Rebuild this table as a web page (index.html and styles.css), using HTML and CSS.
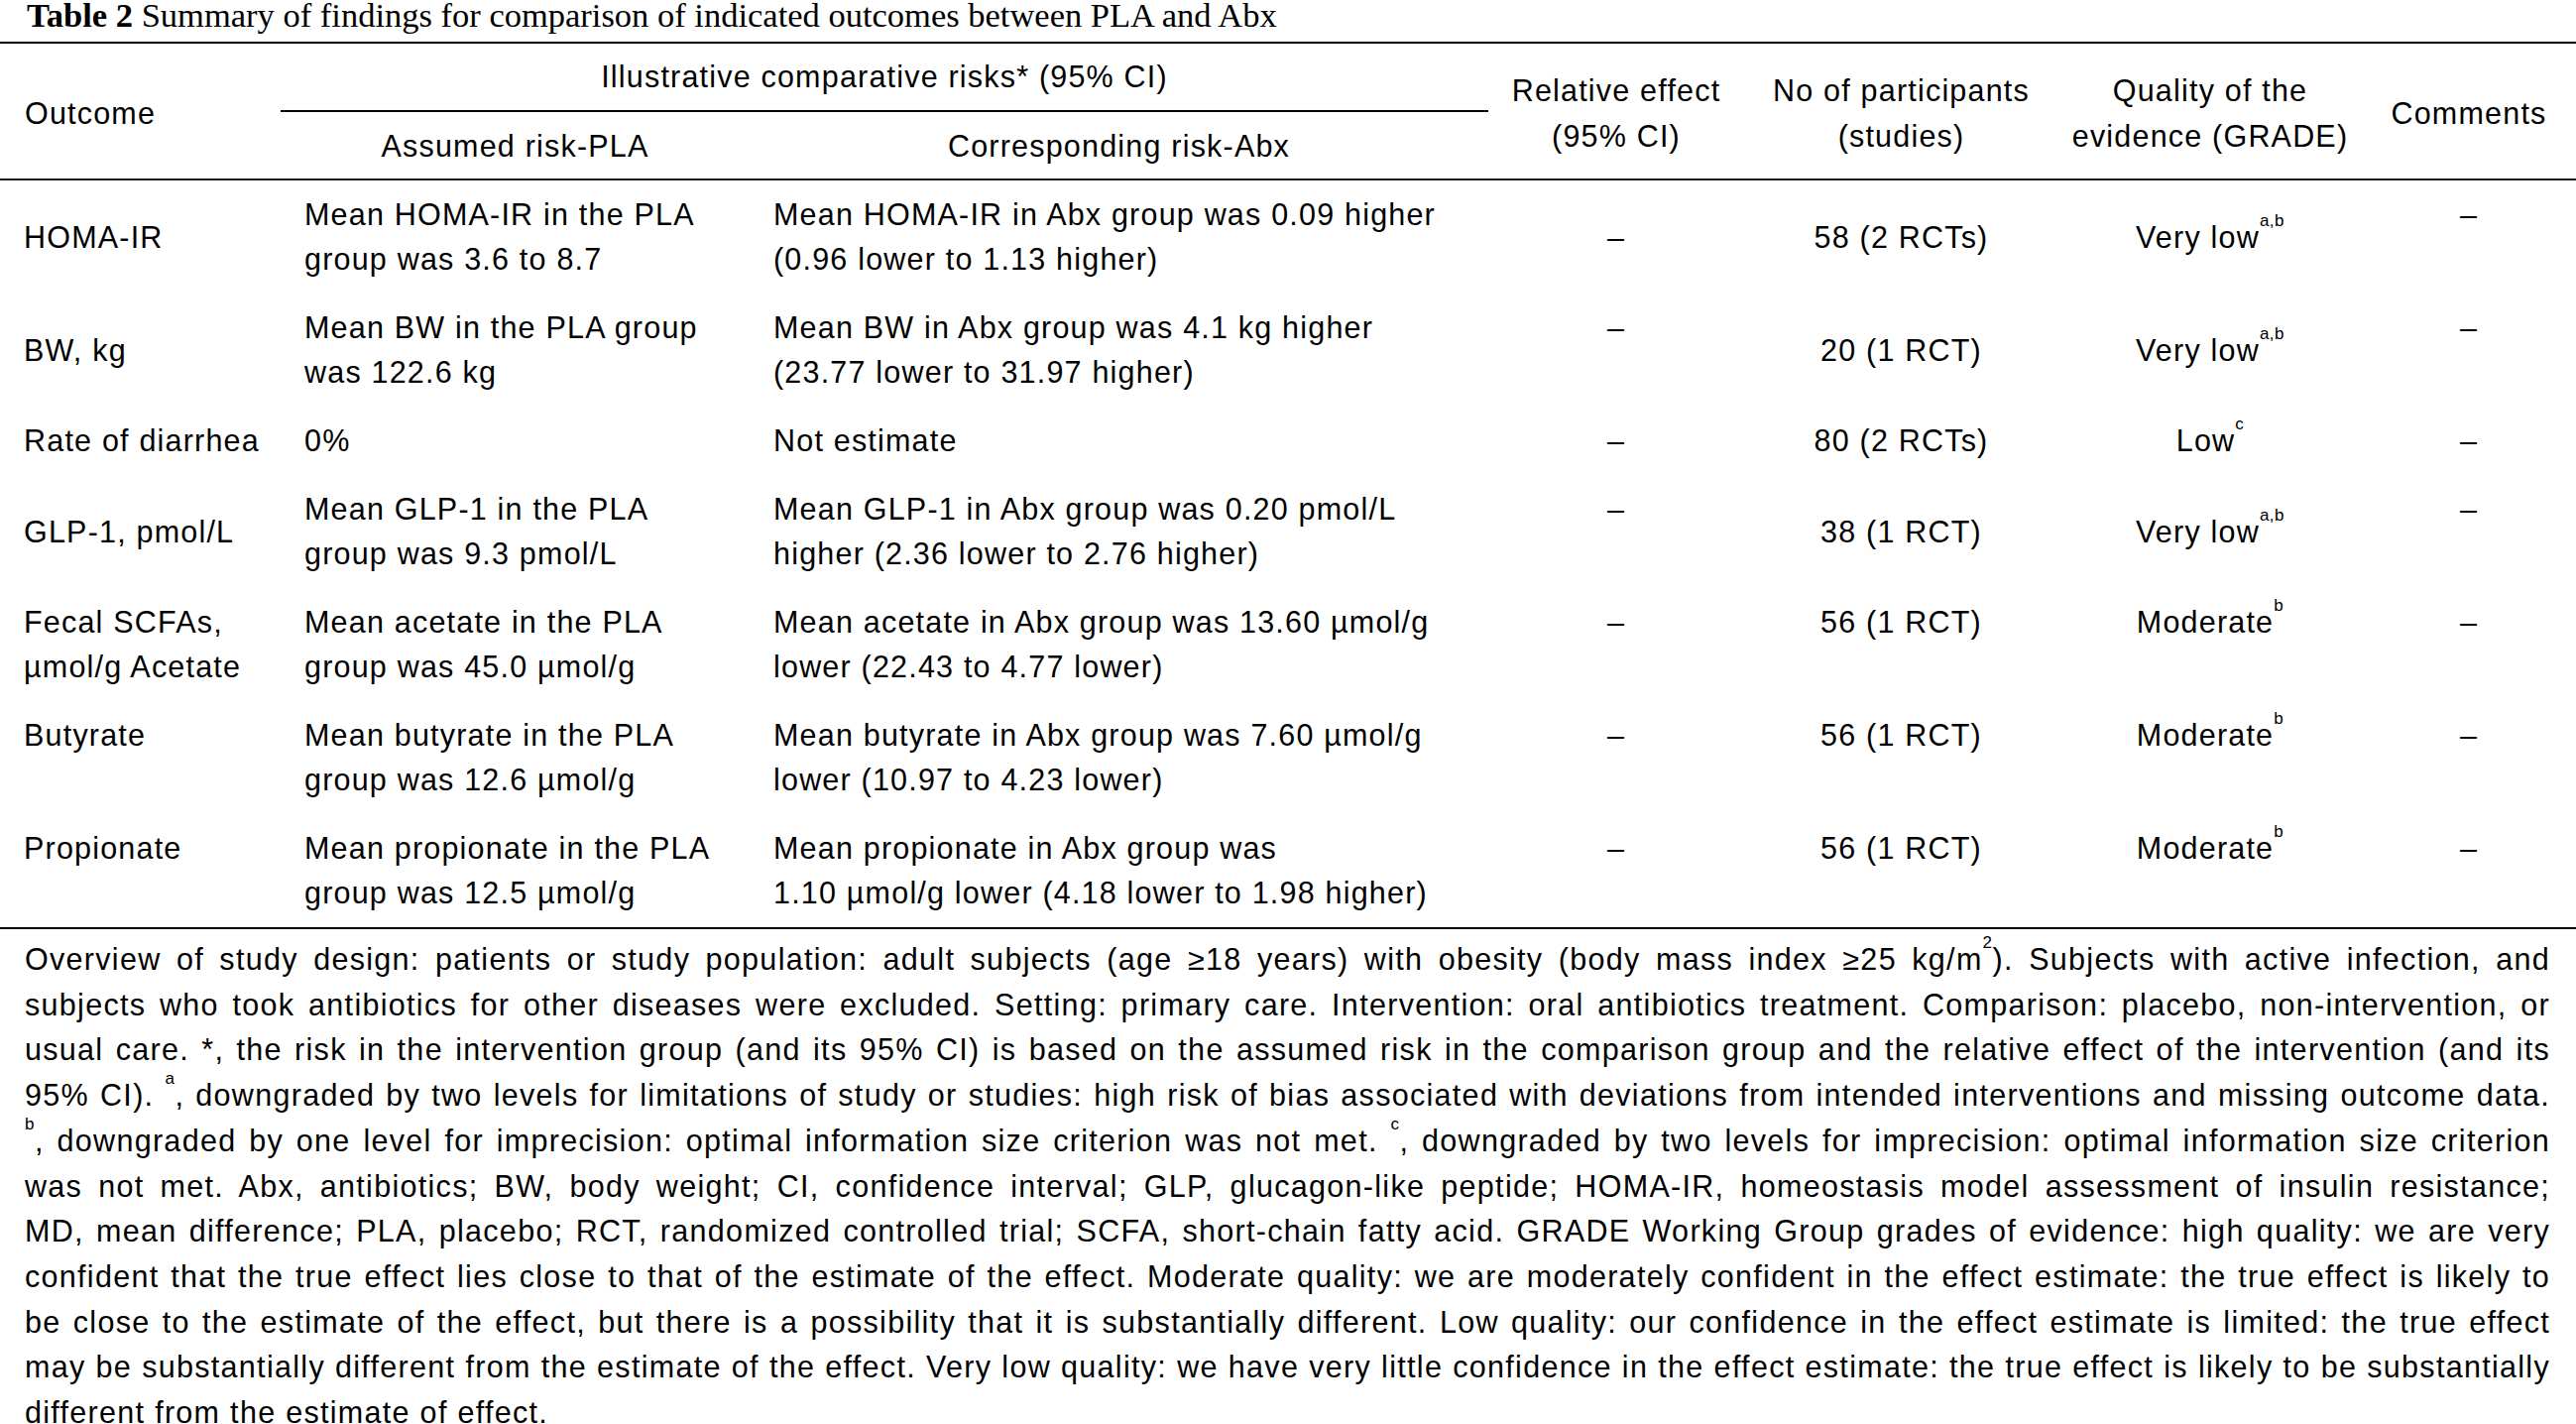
FILE: index.html
```html
<!DOCTYPE html>
<html lang="en">
<head>
<meta charset="utf-8">
<title>Table 2 Summary of findings</title>
<link rel="stylesheet" href="styles.css">
</head>
<body>
<div class="page">
  <h1 class="caption"><b>Table 2</b> Summary of findings for comparison of indicated outcomes between PLA and Abx</h1>
  <table class="sof">
    <colgroup>
      <col class="c-outcome">
      <col class="c-assumed">
      <col class="c-corr">
      <col class="c-rel">
      <col class="c-part">
      <col class="c-qual">
      <col class="c-comm">
    </colgroup>
    <thead>
      <tr class="h1">
        <th rowspan="2" class="span left">Outcome</th>
        <th colspan="2" class="group">Illustrative comparative risks* (95% CI)</th>
        <th rowspan="2" class="span">Relative effect<br>(95% CI)</th>
        <th rowspan="2" class="span">No of participants<br>(studies)</th>
        <th rowspan="2" class="span">Quality of the<br>evidence (GRADE)</th>
        <th rowspan="2" class="span">Comments</th>
      </tr>
      <tr class="h2">
        <th class="sub">Assumed risk-PLA</th>
        <th class="sub">Corresponding risk-Abx</th>
      </tr>
    </thead>
    <tbody>
      <tr>
        <td class="left mid">HOMA-IR</td>
        <td class="left">Mean HOMA-IR in the PLA<br>group was 3.6 to 8.7</td>
        <td class="left">Mean HOMA-IR in Abx group was 0.09 higher<br>(0.96 lower to 1.13 higher)</td>
        <td class="mid">–</td>
        <td class="mid">58 (2 RCTs)</td>
        <td class="mid">Very low<sup>a,b</sup></td>
        <td>–</td>
      </tr>
      <tr>
        <td class="left mid">BW, kg</td>
        <td class="left">Mean BW in the PLA group<br>was 122.6 kg</td>
        <td class="left">Mean BW in Abx group was 4.1 kg higher<br>(23.77 lower to 31.97 higher)</td>
        <td>–</td>
        <td class="mid">20 (1 RCT)</td>
        <td class="mid">Very low<sup>a,b</sup></td>
        <td>–</td>
      </tr>
      <tr>
        <td class="left">Rate of diarrhea</td>
        <td class="left">0%</td>
        <td class="left">Not estimate</td>
        <td>–</td>
        <td>80 (2 RCTs)</td>
        <td>Low<sup>c</sup></td>
        <td>–</td>
      </tr>
      <tr>
        <td class="left mid">GLP-1, pmol/L</td>
        <td class="left">Mean GLP-1 in the PLA<br>group was 9.3 pmol/L</td>
        <td class="left">Mean GLP-1 in Abx group was 0.20 pmol/L<br>higher (2.36 lower to 2.76 higher)</td>
        <td>–</td>
        <td class="mid">38 (1 RCT)</td>
        <td class="mid">Very low<sup>a,b</sup></td>
        <td>–</td>
      </tr>
      <tr>
        <td class="left">Fecal SCFAs,<br>µmol/g Acetate</td>
        <td class="left">Mean acetate in the PLA<br>group was 45.0 µmol/g</td>
        <td class="left">Mean acetate in Abx group was 13.60 µmol/g<br>lower (22.43 to 4.77 lower)</td>
        <td>–</td>
        <td>56 (1 RCT)</td>
        <td>Moderate<sup>b</sup></td>
        <td>–</td>
      </tr>
      <tr>
        <td class="left">Butyrate</td>
        <td class="left">Mean butyrate in the PLA<br>group was 12.6 µmol/g</td>
        <td class="left">Mean butyrate in Abx group was 7.60 µmol/g<br>lower (10.97 to 4.23 lower)</td>
        <td>–</td>
        <td>56 (1 RCT)</td>
        <td>Moderate<sup>b</sup></td>
        <td>–</td>
      </tr>
      <tr>
        <td class="left">Propionate</td>
        <td class="left">Mean propionate in the PLA<br>group was 12.5 µmol/g</td>
        <td class="left">Mean propionate in Abx group was<br>1.10 µmol/g lower (4.18 lower to 1.98 higher)</td>
        <td>–</td>
        <td>56 (1 RCT)</td>
        <td>Moderate<sup>b</sup></td>
        <td>–</td>
      </tr>
    </tbody>
  </table>
  <p class="notes">
    <span class="ln">Overview of study design: patients or study population: adult subjects (age ≥18 years) with obesity (body mass index ≥25 kg/m<sup>2</sup>). Subjects with active infection, and</span>
    <span class="ln">subjects who took antibiotics for other diseases were excluded. Setting: primary care. Intervention: oral antibiotics treatment. Comparison: placebo, non-intervention, or</span>
    <span class="ln">usual care. *, the risk in the intervention group (and its 95% CI) is based on the assumed risk in the comparison group and the relative effect of the intervention (and its</span>
    <span class="ln">95% CI). <sup>a</sup>, downgraded by two levels for limitations of study or studies: high risk of bias associated with deviations from intended interventions and missing outcome data.</span>
    <span class="ln"><sup>b</sup>, downgraded by one level for imprecision: optimal information size criterion was not met. <sup>c</sup>, downgraded by two levels for imprecision: optimal information size criterion</span>
    <span class="ln">was not met. Abx, antibiotics; BW, body weight; CI, confidence interval; GLP, glucagon-like peptide; HOMA-IR, homeostasis model assessment of insulin resistance;</span>
    <span class="ln">MD, mean difference; PLA, placebo; RCT, randomized controlled trial; SCFA, short-chain fatty acid. GRADE Working Group grades of evidence: high quality: we are very</span>
    <span class="ln">confident that the true effect lies close to that of the estimate of the effect. Moderate quality: we are moderately confident in the effect estimate: the true effect is likely to</span>
    <span class="ln">be close to the estimate of the effect, but there is a possibility that it is substantially different. Low quality: our confidence in the effect estimate is limited: the true effect</span>
    <span class="ln">may be substantially different from the estimate of the effect. Very low quality: we have very little confidence in the effect estimate: the true effect is likely to be substantially</span>
    <span class="ln last">different from the estimate of effect.</span>
  </p>
</div>
</body>
</html>
```

FILE: styles.css
```css
html, body {
  margin: 0;
  padding: 0;
  background: #ffffff;
}

.page {
  width: 2598px;
  color: #000000;
  font-family: "Liberation Sans", Arial, Helvetica, sans-serif;
  font-size: 30.5px;
  letter-spacing: 1.2px;
}

.caption {
  margin: 0;
  padding: 0 0 12px 27px;
  font-family: "Liberation Serif", "Times New Roman", serif;
  font-size: 34.5px;
  font-weight: normal;
  line-height: 30px;
  letter-spacing: 0;
  white-space: nowrap;
}

.caption b {
  font-weight: bold;
}

.sof {
  width: 2598px;
  table-layout: fixed;
  border-collapse: separate;
  border-spacing: 0;
  border-top: 2px solid #000;
  border-bottom: 2px solid #000;
}

.c-outcome { width: 283px; }
.c-assumed { width: 473px; }
.c-corr { width: 745px; }
.c-rel { width: 258px; }
.c-part { width: 317px; }
.c-qual { width: 306px; }
.c-comm { width: 216px; }

.sof th {
  font-weight: normal;
  line-height: 46px;
  text-align: center;
  vertical-align: middle;
  padding: 0 2px;
  white-space: nowrap;
}

.sof th.span {
  padding-top: 3px;
  border-bottom: 2px solid #1a1a1a;
}

.sof th.group {
  padding-top: 10px;
  padding-bottom: 11px;
  border-bottom: 2px solid #000;
}

.sof th.sub {
  padding-top: 11px;
  padding-bottom: 10px;
  border-bottom: 2px solid #1a1a1a;
}

.sof th.left {
  text-align: left;
  padding-left: 25px;
}

.sof td {
  line-height: 45px;
  padding: 12px 2px;
  text-align: center;
  vertical-align: top;
  white-space: nowrap;
}

.sof td.left {
  text-align: left;
  padding-left: 24px;
}

.sof td.mid {
  vertical-align: middle;
}

sup {
  font-size: 17px;
  line-height: 0;
  vertical-align: 22px;
  letter-spacing: 0.5px;
}

.notes {
  margin: 0;
  padding: 8px 26px 0 25px;
  line-height: 45.7px;
  letter-spacing: 1.3px;
}

.notes .ln {
  display: block;
  white-space: nowrap;
  text-align: justify;
  text-align-last: justify;
}

.notes .ln.last {
  text-align-last: left;
}
```
